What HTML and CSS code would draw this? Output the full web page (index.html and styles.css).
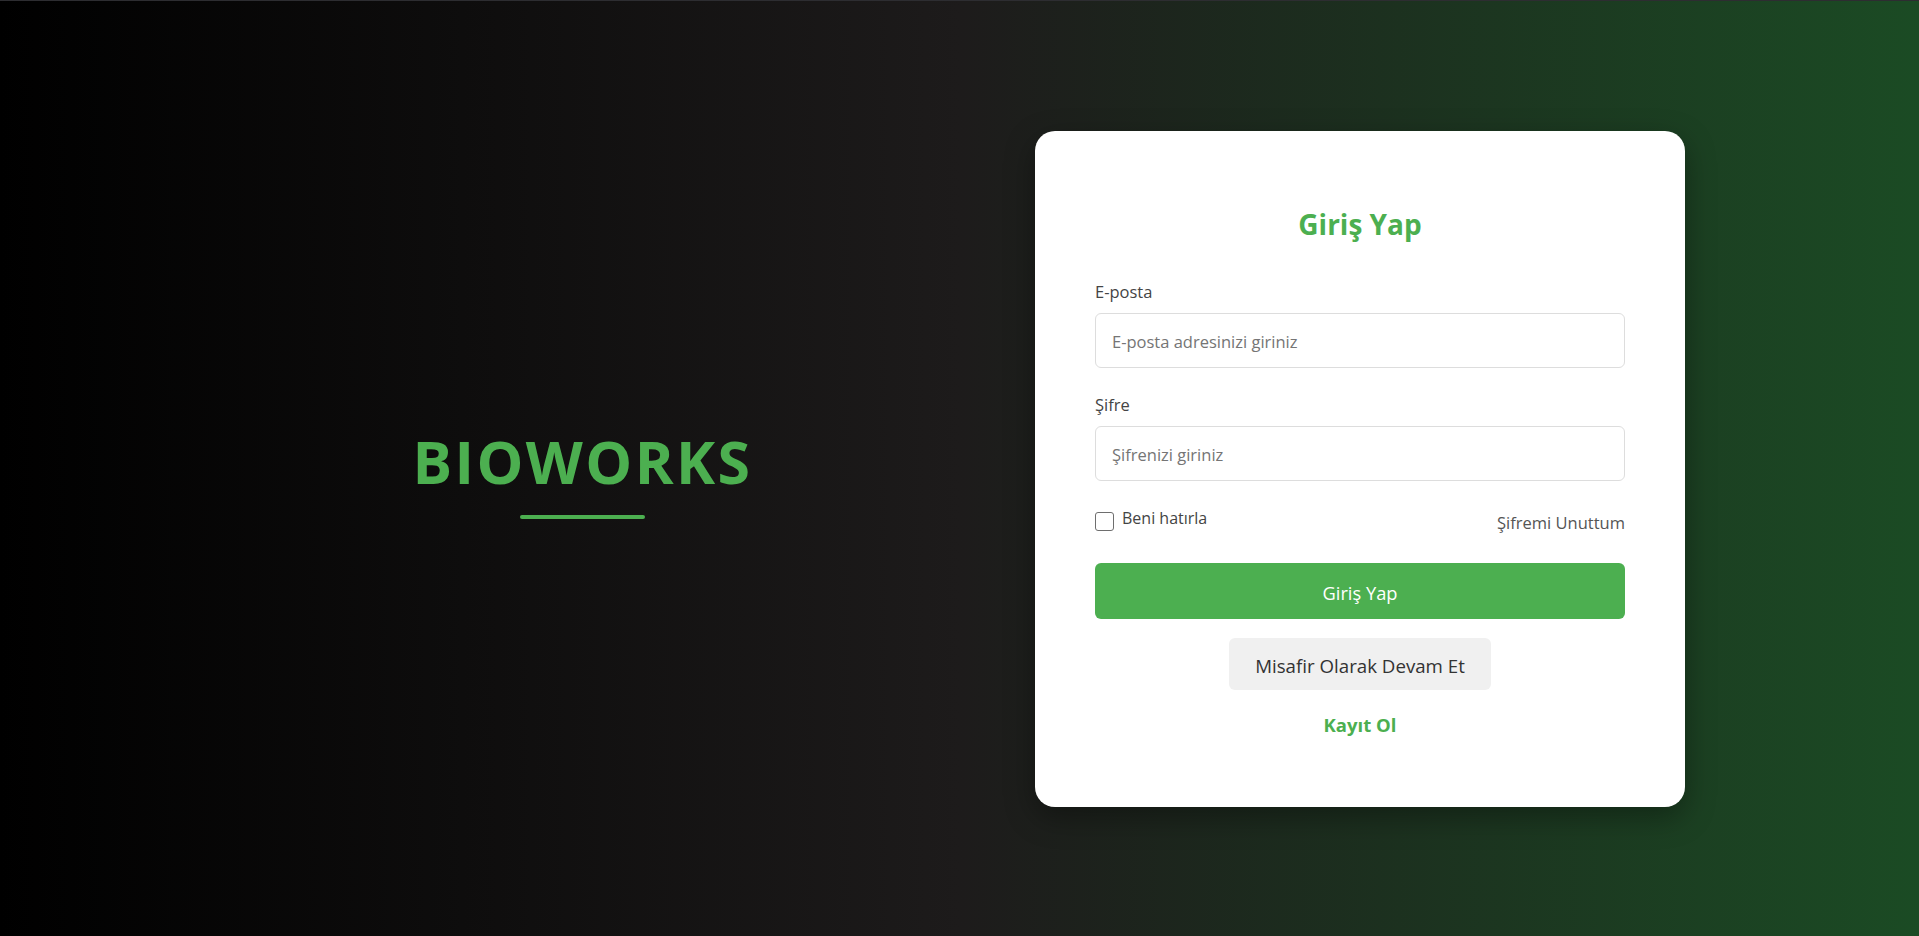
FILE: index.html
```html
<!DOCTYPE html>
<html lang="tr">
<head>
<meta charset="utf-8">
<title>BIOWORKS - Giriş Yap</title>
<link rel="stylesheet" href="styles.css">
</head>
<body>
<main class="page">
  <section class="brand">
    <h1 class="brand-name">BIOWORKS</h1>
    <div class="brand-line"></div>
  </section>
  <section class="card">
    <h2 class="card-title">Giriş Yap</h2>
    <form class="form">
      <div class="field">
        <label class="field-label" for="email">E-posta</label>
        <input class="field-input" id="email" type="email" placeholder="E-posta adresinizi giriniz">
      </div>
      <div class="field">
        <label class="field-label" for="password">Şifre</label>
        <input class="field-input" id="password" type="password" placeholder="Şifrenizi giriniz">
      </div>
      <div class="options">
        <label class="remember">
          <input class="remember-box" type="checkbox">
          <span>Beni hatırla</span>
        </label>
        <a class="forgot" href="#">Şifremi Unuttum</a>
      </div>
      <button class="btn-primary" type="button">Giriş Yap</button>
      <div class="guest-wrap">
        <button class="btn-guest" type="button">Misafir Olarak Devam Et</button>
      </div>
      <div class="register-wrap">
        <a class="register" href="#">Kayıt Ol</a>
      </div>
    </form>
  </section>
</main>
</body>
</html>
```
FILE: styles.css
```css
* {
  box-sizing: border-box;
}

html, body {
  margin: 0;
  padding: 0;
  height: 100%;
}

body {
  font-family: "Open Sans", "Noto Sans", "Liberation Sans", sans-serif;
  background: linear-gradient(to right, #000000 0%, #1d1b1b 50%, #1b4b24 100%);
  overflow: hidden;
}

.page {
  height: 100vh;
  border-top: 1px solid #2d2d31;
  display: grid;
  grid-template-columns: 1fr 650px;
  align-items: center;
  padding-right: 234px;
}

.brand {
  display: flex;
  flex-direction: column;
  align-items: center;
  padding-left: 130px;
  padding-top: 8px;
}

.brand-name {
  margin: 0;
  font-size: 59px;
  line-height: 70px;
  font-weight: 700;
  letter-spacing: 2.4px;
  color: #4caf50;
}

.brand-line {
  width: 125px;
  height: 4px;
  border-radius: 2px;
  background: #4caf50;
  margin-top: 19px;
}

.card {
  background: #ffffff;
  border-radius: 20px;
  padding: 75px 60px 68px;
  box-shadow: 0 10px 30px rgba(0, 0, 0, 0.35);
}

.card-title {
  margin: 0 0 39px;
  text-align: center;
  font-size: 28px;
  line-height: 36px;
  font-weight: 700;
  color: #4caf50;
}

.form {
  display: flex;
  flex-direction: column;
}

.field {
  display: flex;
  flex-direction: column;
  margin-bottom: 26px;
}

.field + .field {
  margin-bottom: 26px;
}

.field-label {
  font-size: 16.5px;
  line-height: 22px;
  color: #444444;
  margin-bottom: 10px;
}

.field-input {
  height: 55px;
  border: 1px solid #dddddd;
  border-radius: 6px;
  padding: 3px 16px 0;
  font-family: inherit;
  font-size: 16.5px;
  color: #333333;
  background: #ffffff;
  outline: none;
}

.field-input::placeholder {
  color: #757575;
}

.options {
  display: flex;
  justify-content: space-between;
  align-items: flex-start;
  margin-bottom: 29px;
}

.remember {
  display: flex;
  align-items: flex-start;
  gap: 8px;
  font-size: 16px;
  line-height: 22px;
  color: #444444;
}

.remember-box {
  appearance: none;
  -webkit-appearance: none;
  width: 19px;
  height: 19px;
  margin: 5px 0 0;
  border: 1.5px solid #6e6e6e;
  border-radius: 3px;
  background: #ffffff;
}

.forgot {
  margin-top: 5px;
  font-size: 16.5px;
  line-height: 22px;
  color: #555555;
  text-decoration: none;
}

.btn-primary {
  height: 56px;
  border: none;
  border-radius: 6px;
  background: #4caf50;
  color: #ffffff;
  font-family: inherit;
  font-size: 18.3px;
  padding: 4px 0 0;
  margin-bottom: 19px;
}

.guest-wrap {
  display: flex;
  justify-content: center;
  margin-bottom: 22px;
}

.btn-guest {
  width: 262px;
  height: 52px;
  border: none;
  border-radius: 6px;
  background: #f0f0f0;
  color: #333333;
  font-family: inherit;
  font-size: 18.7px;
  padding: 4px 0 0;
}

.register-wrap {
  text-align: center;
  line-height: 26px;
}

.register {
  font-size: 18.5px;
  font-weight: 700;
  color: #4caf50;
  text-decoration: none;
}
```
